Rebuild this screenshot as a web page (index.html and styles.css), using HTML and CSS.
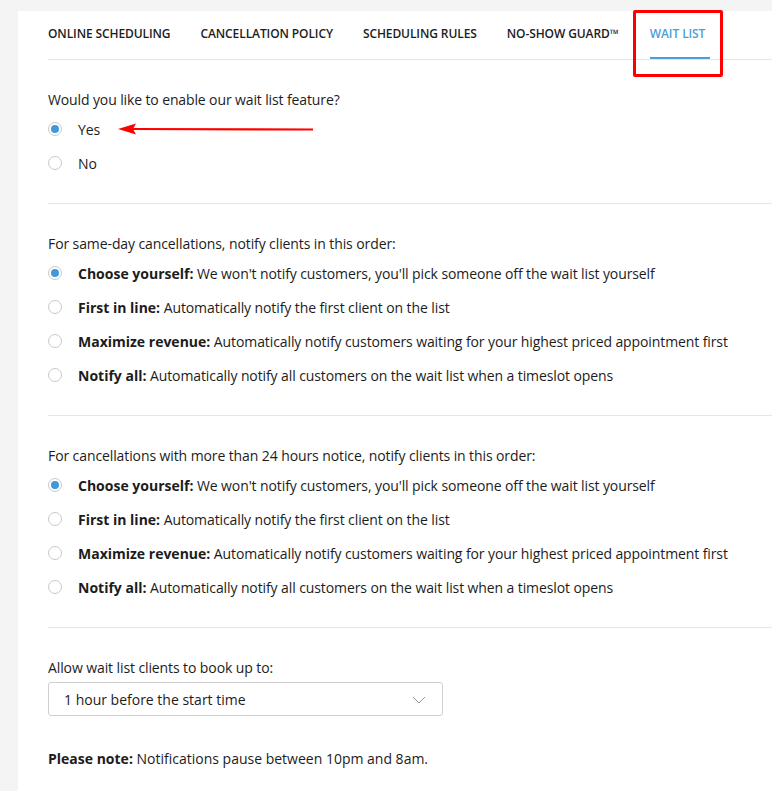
FILE: index.html
```html
<!DOCTYPE html>
<html lang="en">
<head>
    <meta charset="UTF-8">
    <meta name="viewport" content="width=device-width, initial-scale=1.0">
    <title>Wait List Settings</title>
    <link rel="stylesheet" href="styles.css">
</head>
<body>
    <div class="panel">
        <div class="tabs">
            <div class="tab">Online Scheduling</div>
            <div class="tab">Cancellation Policy</div>
            <div class="tab">Scheduling Rules</div>
            <div class="tab">No-Show Guard&trade;</div>
            <div class="tab active">Wait List<span class="highlight-box"></span></div>
        </div>

        <div class="section">
            <div class="question first">Would you like to enable our wait list feature?</div>
            <label class="option">
                <span class="radio checked"></span>Yes
                <svg class="arrow" width="196" height="14" viewBox="0 0 196 14">
                    <line x1="14" y1="7" x2="195" y2="7.5" stroke="#f00" stroke-width="2.2"/>
                    <polygon points="0,7 18,1.5 15,7 18,12.5" fill="#f00"/>
                </svg>
            </label>
            <label class="option"><span class="radio"></span>No</label>
        </div>

        <div class="section">
            <div class="question">For same-day cancellations, notify clients in this order:</div>
            <label class="option"><span class="radio checked"></span><span><b>Choose yourself:</b> We won't notify customers, you'll pick someone off the wait list yourself</span></label>
            <label class="option"><span class="radio"></span><span><b>First in line:</b> Automatically notify the first client on the list</span></label>
            <label class="option"><span class="radio"></span><span><b>Maximize revenue:</b> Automatically notify customers waiting for your highest priced appointment first</span></label>
            <label class="option"><span class="radio"></span><span><b>Notify all:</b> Automatically notify all customers on the wait list when a timeslot opens</span></label>
        </div>

        <div class="section">
            <div class="question">For cancellations with more than 24 hours notice, notify clients in this order:</div>
            <label class="option"><span class="radio checked"></span><span><b>Choose yourself:</b> We won't notify customers, you'll pick someone off the wait list yourself</span></label>
            <label class="option"><span class="radio"></span><span><b>First in line:</b> Automatically notify the first client on the list</span></label>
            <label class="option"><span class="radio"></span><span><b>Maximize revenue:</b> Automatically notify customers waiting for your highest priced appointment first</span></label>
            <label class="option"><span class="radio"></span><span><b>Notify all:</b> Automatically notify all customers on the wait list when a timeslot opens</span></label>
        </div>

        <div class="section last">
            <div class="question">Allow wait list clients to book up to:</div>
            <div class="select">
                <span>1 hour before the start time</span>
                <svg class="chevron" width="14" height="8" viewBox="0 0 14 8">
                    <polyline points="1,1 7,7 13,1" fill="none" stroke="#9a9a9a" stroke-width="1"/>
                </svg>
            </div>
            <div class="note"><b>Please note:</b> Notifications pause between 10pm and 8am.</div>
        </div>
    </div>
</body>
</html>
```

FILE: styles.css
```css
body {
    margin: 0;
    padding: 11px 0 0 18px;
    background-color: #f4f4f4;
    font-family: "Open Sans", Arial, sans-serif;
    font-size: 14px;
    color: #1c1c1c;
}
.panel {
    background-color: #fff;
    padding-left: 30px;
    min-height: 780px;
}
.tabs {
    display: flex;
    gap: 30px;
    height: 48px;
    border-bottom: 1px solid #e6e6e6;
}
.tab {
    position: relative;
    text-transform: uppercase;
    font-size: 12px;
    font-weight: 600;
    letter-spacing: -0.1px;
    line-height: 16px;
    padding-top: 15px;
    color: #1c1c1c;
}
.tab:last-child {
    margin-left: 1px;
}
.tab.active {
    color: #4a9fda;
    padding-right: 5px;
    border-bottom: 2px solid #4a9fda;
    height: 31px;
}
.highlight-box {
    position: absolute;
    left: -17px;
    right: -13px;
    top: -1px;
    height: 61px;
    border: 3px solid #f00;
    border-radius: 2px;
}
.section {
    padding: 30px 0 23px;
    border-bottom: 1px solid #e6e6e6;
}
.section.last {
    border-bottom: none;
}
.question {
    line-height: 20px;
    margin-bottom: 2px;
    letter-spacing: -0.1px;
}
.question.first {
    letter-spacing: -0.12px;
}
.option {
    position: relative;
    display: flex;
    align-items: center;
    height: 34px;
    gap: 16px;
    letter-spacing: -0.1px;
}
.option b {
    font-weight: 700;
    letter-spacing: 0;
}
.radio {
    box-sizing: border-box;
    flex: none;
    width: 14px;
    height: 14px;
    border: 1px solid #c9c9c9;
    border-radius: 50%;
    background-color: #fff;
    display: flex;
    align-items: center;
    justify-content: center;
}
.radio.checked::after {
    content: "";
    width: 8px;
    height: 8px;
    border-radius: 50%;
    background-color: #3f98d8;
}
.arrow {
    position: absolute;
    left: 70px;
    top: 10px;
}
.select {
    box-sizing: border-box;
    width: 395px;
    height: 34px;
    margin-top: 4px;
    padding: 1px 16px 0 15px;
    border: 1px solid #cfcfcf;
    border-radius: 3px;
    display: flex;
    align-items: center;
    justify-content: space-between;
}
.note {
    margin-top: 33px;
    line-height: 20px;
}
.note b {
    font-weight: 700;
}
```
